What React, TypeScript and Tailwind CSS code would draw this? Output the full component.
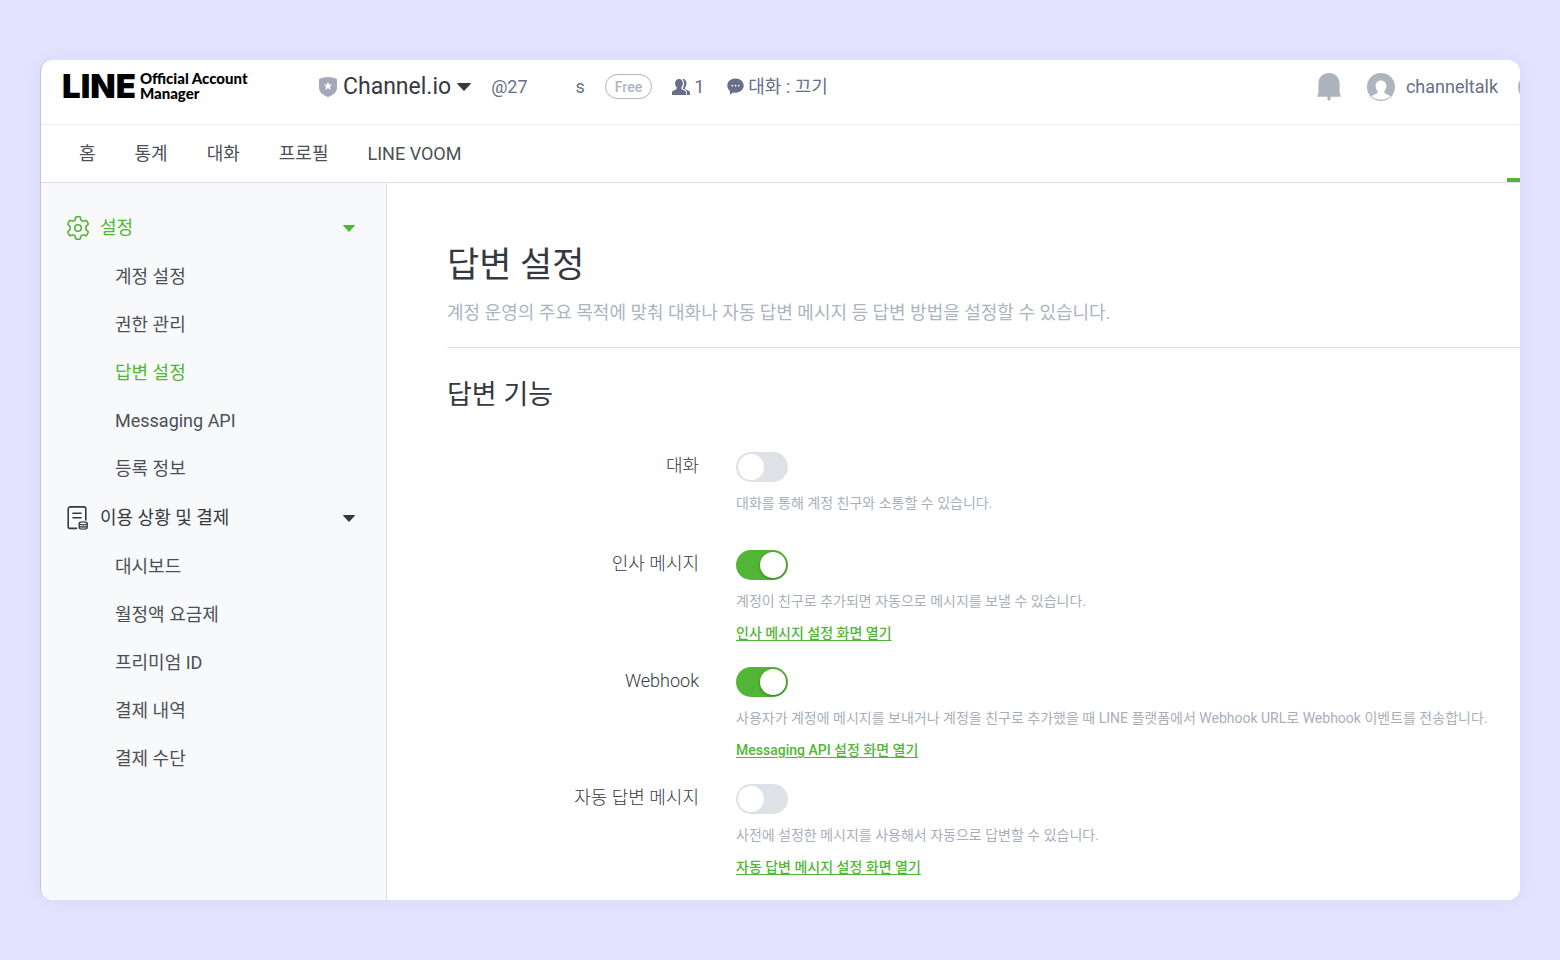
import { useState } from 'react'
import type { ReactNode } from 'react'
import clsx from 'clsx'

type Feature = {
  id: string
  label: string
  description: string
  link?: string
  enabled: boolean
}

const NAV_ITEMS = ['홈', '통계', '대화', '프로필', 'LINE VOOM']

const SETTINGS_ITEMS = ['계정 설정', '권한 관리', '답변 설정', 'Messaging API', '등록 정보']
const BILLING_ITEMS = ['대시보드', '월정액 요금제', '프리미엄 ID', '결제 내역', '결제 수단']

const FEATURES: Feature[] = [
  {
    id: 'chat',
    label: '대화',
    description: '대화를 통해 계정 친구와 소통할 수 있습니다.',
    enabled: false,
  },
  {
    id: 'greeting',
    label: '인사 메시지',
    description: '계정이 친구로 추가되면 자동으로 메시지를 보낼 수 있습니다.',
    link: '인사 메시지 설정 화면 열기',
    enabled: true,
  },
  {
    id: 'webhook',
    label: 'Webhook',
    description:
      '사용자가 계정에 메시지를 보내거나 계정을 친구로 추가했을 때 LINE 플랫폼에서 Webhook URL로 Webhook 이벤트를 전송합니다.',
    link: 'Messaging API 설정 화면 열기',
    enabled: true,
  },
  {
    id: 'auto-reply',
    label: '자동 답변 메시지',
    description: '사전에 설정한 메시지를 사용해서 자동으로 답변할 수 있습니다.',
    link: '자동 답변 메시지 설정 화면 열기',
    enabled: false,
  },
]

function Caret({ className = 'h-[7px] w-3' }: { className?: string }) {
  return (
    <svg viewBox="0 0 12 7" className={clsx('shrink-0', className)} fill="currentColor" aria-hidden="true">
      <path d="M0.6 0h10.8c.5 0 .7.5.4.8L6.5 6.6c-.3.3-.7.3-1 0L.2.8C-.1.5.1 0 .6 0z" />
    </svg>
  )
}

function ShieldIcon() {
  return (
    <svg viewBox="0 0 18 20" className="h-5 w-[18px] shrink-0" aria-hidden="true">
      <path d="M0 2.2C3 .7 6 0 9 0s6 .7 9 2.2v8.3c0 4.500-3.200 7.500-9 9.500-5.800-2-9-5-9-9.500z" fill="#a5a8b8" />
      <path d="M9 4.800l1.200 2.700 2.900.3-2.200 2 .65 2.900L9 11.200l-2.550 1.500.65-2.900-2.200-2 2.900-.3z" fill="#fff" />
    </svg>
  )
}

function FriendsIcon() {
  return (
    <svg viewBox="0 0 18 16" className="h-4 w-[18px] shrink-0" fill="currentColor" aria-hidden="true">
      <path d="M7 0c2.400 0 3.900 1.700 3.900 4.200 0 1.700-.6 3.100-1.500 4v1.300c0 .5.300.9.800 1.100l2.600 1.100c.8.400 1.200 1 1.200 1.900V16H0v-2.400c0-.9.400-1.500 1.200-1.900l2.600-1.100c.5-.2.800-.6.800-1.100V8.200c-.9-.9-1.500-2.300-1.500-4C3.100 1.700 4.600 0 7 0z" />
      <path d="M11 0c2.200.1 3.500 1.800 3.500 4.200 0 1.700-.5 3.100-1.400 4v1.300c0 .5.300.9.800 1.100l2.900 1.200c.8.400 1.200 1 1.200 1.900V16h-3.200v-2.500c0-1.400-.7-2.300-1.900-2.900l-1.600-.7c-.3-.1-.4-.4-.4-.7V9c.5-.9 1.100-2.700 1.100-4.600 0-1.900-.5-3.300-1.600-4.400z" />
    </svg>
  )
}

function ChatIcon() {
  return (
    <svg viewBox="0 0 17 17" className="size-[17px] shrink-0" aria-hidden="true">
      <path d="M8.500.5c4.700 0 8.200 3 8.200 7.100s-3.500 7.100-8.200 7.100c-.8 0-1.600-.1-2.300-.3L2.900 16.800v-3.700C1.300 11.800.3 9.800.3 7.600.3 3.500 3.800.5 8.500.5z" fill="currentColor" />
      <g fill="#fff">
        <circle cx="5.300" cy="7.600" r="0.900" />
        <circle cx="8.500" cy="7.600" r="0.900" />
        <circle cx="11.700" cy="7.600" r="0.900" />
      </g>
    </svg>
  )
}

function BellIcon() {
  return (
    <svg viewBox="0 0 24 28" className="h-7 w-6" fill="currentColor" aria-hidden="true">
      <path d="M12 0c6.200 0 10.600 4.300 10.600 10.300v8.200c0 1.600.4 2.800 1.100 4.200.2.500 0 1-.5 1H13.500v3c0 .5-.3.8-.8.8h-1.400c-.5 0-.8-.3-.8-.8v-3H.8c-.5 0-.7-.5-.5-1 .7-1.400 1.100-2.600 1.100-4.200v-8.200C1.400 4.300 5.800 0 12 0z" />
    </svg>
  )
}

function AvatarIcon() {
  return (
    <svg viewBox="0 0 28 28" className="size-7 shrink-0" aria-hidden="true">
      <circle cx="14" cy="14" r="14" fill="#adb4bd" />
      <path
        d="M14 7.500c3.300 0 5.400 2.400 5.400 5.500 0 2.100-.8 3.900-2 5v1.100c0 .6.300 1 .8 1.300 1.900 1 4 1.700 5.300 2.900-2.300 2.200-5.600 3.500-9.500 3.500s-7.200-1.300-9.500-3.500c1.300-1.200 3.400-1.900 5.300-2.900.5-.3.800-.7.800-1.300V18c-1.200-1.100-2-2.900-2-5 0-3.100 2.100-5.500 5.400-5.500z"
        fill="#fff"
      />
    </svg>
  )
}

function GearIcon() {
  return (
    <svg viewBox="0 0 24 24" className="size-6 shrink-0" fill="none" stroke="currentColor" strokeWidth="1.600" strokeLinejoin="round" aria-hidden="true">
      <path d="M9.600 1.500Q9.700.8 10.400.8h3.200q.7 0 .8.700l.3 2q.1.600.7.900l1.100.6q.5.300 1.100.1l1.900-.7q.7-.3 1 .3l1.700 2.900q.3.600-.2 1l-1.600 1.300q-.5.400-.5 1v2.200q0 .6.500 1l1.600 1.300q.5.400.2 1l-1.700 2.900q-.3.600-1 .3l-1.900-.7q-.6-.2-1.100.1l-1.100.6q-.6.300-.7.900l-.3 2q-.1.700-.8.700h-3.200q-.7 0-.8-.7l-.3-2q-.1-.6-.7-.9l-1.100-.6q-.5-.3-1.100-.1l-1.900.7q-.7.300-1-.3l-1.700-2.900q-.3-.6.200-1l1.600-1.300q.5-.4.5-1v-2.200q0-.6-.5-1L2 8.600q-.5-.4-.2-1l1.700-2.900q.3-.6 1-.3l1.900.7q.6.200 1.100-.1l1.100-.6q.6-.3.700-.9z" />
      <circle cx="12" cy="12" r="3.300" />
    </svg>
  )
}

function BillIcon() {
  return (
    <svg viewBox="0 0 24 24" className="size-6 shrink-0" fill="none" stroke="currentColor" strokeWidth="1.600" strokeLinecap="round" aria-hidden="true">
      <path d="M10.500 22.400H4.200a2 2 0 0 1-2-2V2.900a2 2 0 0 1 2-2h13.600a2 2 0 0 1 2 2v11" />
      <path d="M7 7.200h8M7 11.800h8" />
      <g strokeWidth="1.300">
        <ellipse cx="17.200" cy="17.300" rx="4" ry="1.500" />
        <path d="M13.200 17.300v4.300c0 .9 1.800 1.600 4 1.600s4-.7 4-1.600v-4.300M13.200 19.500c0 .8 1.800 1.500 4 1.500s4-.7 4-1.500" />
      </g>
    </svg>
  )
}

function SideGroup({
  icon,
  title,
  items,
  active,
  current,
  onSelect,
}: {
  icon: ReactNode
  title: string
  items: string[]
  active?: boolean
  current: string
  onSelect: (item: string) => void
}) {
  const [open, setOpen] = useState(true)

  return (
    <div>
      <button
        type="button"
        aria-expanded={open}
        onClick={() => setOpen(!open)}
        className={clsx(
          'flex h-12 w-full items-center gap-2.5 pr-[31px] pl-[25px] text-left',
          active ? 'text-[#53b535]' : 'text-[#35393f]'
        )}
      >
        {icon}
        <span className="flex-1">{title}</span>
        <Caret />
      </button>
      {open && (
        <ul className="py-px">
          {items.map((item) => (
            <li key={item}>
              <a
                href="#"
                onClick={() => onSelect(item)}
                className={clsx(
                  'flex h-12 items-center pl-[74px]',
                  item === current ? 'text-[#53b535]' : 'text-[#4b5057]'
                )}
              >
                {item}
              </a>
            </li>
          ))}
        </ul>
      )}
    </div>
  )
}

function FeatureRow({ feature }: { feature: Feature }) {
  const [enabled, setEnabled] = useState(feature.enabled)

  return (
    <div className="flex min-h-[74px] gap-[37px]">
      <label htmlFor={feature.id} className="w-[252px] shrink-0 text-right text-lg/7 font-light text-[#35393f]">
        {feature.label}
      </label>
      <div className="flex flex-col items-start text-sm/5">
        <input
          id={feature.id}
          type="checkbox"
          role="switch"
          checked={enabled}
          onChange={(e) => setEnabled(e.target.checked)}
          className="flex h-[30px] w-[52px] cursor-pointer appearance-none items-center rounded-full bg-[#dee2e7] px-0.5 before:size-[26px] before:rounded-full before:bg-white checked:justify-end checked:bg-[#53b535] checked:before:shadow-[0_1px_3px_rgba(0,0,0,0.35)]"
        />
        <p className="mt-[11px] whitespace-nowrap text-[#a8afb9]">{feature.description}</p>
        {feature.link && (
          <a href="#" className="mt-3 font-medium text-[#53b535] underline underline-offset-2">
            {feature.link}
          </a>
        )}
      </div>
    </div>
  )
}

export default function App() {
  const [current, setCurrent] = useState('답변 설정')

  return (
    <div className="min-h-screen bg-[#e3e3ff] px-10 py-[60px] font-['Roboto','Noto_Sans_CJK_KR',sans-serif] text-lg/6">
      <div className="flex min-h-[840px] flex-col overflow-hidden rounded-xl border-l border-[#c4c6ca] bg-white shadow-[0_0_16px_rgba(90,90,180,0.08)]">
        <header className="flex h-[65px] items-start overflow-hidden border-b border-[#efefef] pl-[21px] whitespace-nowrap text-[#686f87]">
          <a href="#" className="mt-2 flex w-[257px] shrink-0 items-center gap-1 text-black">
            <span className="font-['Inter'] text-[33px]/9 font-black">LINE</span>
            <span className="font-['Lato'] text-[15px]/[15px] font-black">
              Official Account
              <br />
              Manager
            </span>
          </a>
          <div className="flex h-[53px] flex-1 items-center">
            <ShieldIcon />
            <button type="button" className="ml-1.5 flex items-center gap-1.5 text-[23px] text-[#35393f]">
              Channel.io
              <Caret className="h-2 w-[14px]" />
            </button>
            <span className="ml-5">@27</span>
            <span className="ml-12">s</span>
            <span className="ml-5 flex h-[25px] items-center rounded-full border border-[#adb4bd] px-[9px] text-sm font-medium text-[#adb4bd]">
              Free
            </span>
            <span className="ml-5 flex items-center gap-1">
              <FriendsIcon />1
            </span>
            <span className="ml-[23px] flex items-center gap-1">
              <ChatIcon />
              대화 : 끄기
            </span>
          </div>
          <div className="-mr-6 flex h-[53px] shrink-0 items-center">
            <button type="button" aria-label="알림" className="text-[#adb4bd]">
              <BellIcon />
            </button>
            <button type="button" className="ml-[26px] flex items-center gap-[11px]">
              <AvatarIcon />
              channeltalk
            </button>
            <button type="button" aria-label="도움말" className="ml-5 size-[26px] rounded-full bg-[#adb4bd]" />
          </div>
        </header>

        <nav className="flex h-[58px] items-stretch overflow-hidden border-b border-[#dfe1e6] pl-[38px] text-[#4b5057]">
          <div className="flex flex-1 items-center gap-[39px]">
            {NAV_ITEMS.map((item) => (
              <a key={item} href="#">
                {item}
              </a>
            ))}
          </div>
          <a href="#" aria-label="설정" className="w-[13px] border-b-4 border-[#53b535]" />
        </nav>

        <div className="flex flex-1">
          <aside className="w-[346px] shrink-0 border-r border-[#dfe1e6] bg-[#f8f9fb] pt-[21px]">
            <SideGroup
              icon={<GearIcon />}
              title="설정"
              items={SETTINGS_ITEMS}
              active
              current={current}
              onSelect={setCurrent}
            />
            <SideGroup
              icon={<BillIcon />}
              title="이용 상황 및 결제"
              items={BILLING_ITEMS}
              current={current}
              onSelect={setCurrent}
            />
          </aside>

          <main className="min-w-0 flex-1 pt-[58px] pl-[60px] text-[#35393f]">
            <div className="border-b border-[#dfe1e3] pb-[22px]">
              <h1 className="text-[35px]/[50px]">답변 설정</h1>
              <p className="mt-2.5 text-[#adb4bd]">계정 운영의 주요 목적에 맞춰 대화나 자동 답변 메시지 등 답변 방법을 설정할 수 있습니다.</p>
            </div>
            <section>
              <h2 className="mt-[29px] mb-[39px] text-[27px]/9">답변 기능</h2>
              <div className="flex flex-col gap-6">
                {FEATURES.map((feature) => (
                  <FeatureRow key={feature.id} feature={feature} />
                ))}
              </div>
            </section>
          </main>
        </div>
      </div>
    </div>
  )
}
